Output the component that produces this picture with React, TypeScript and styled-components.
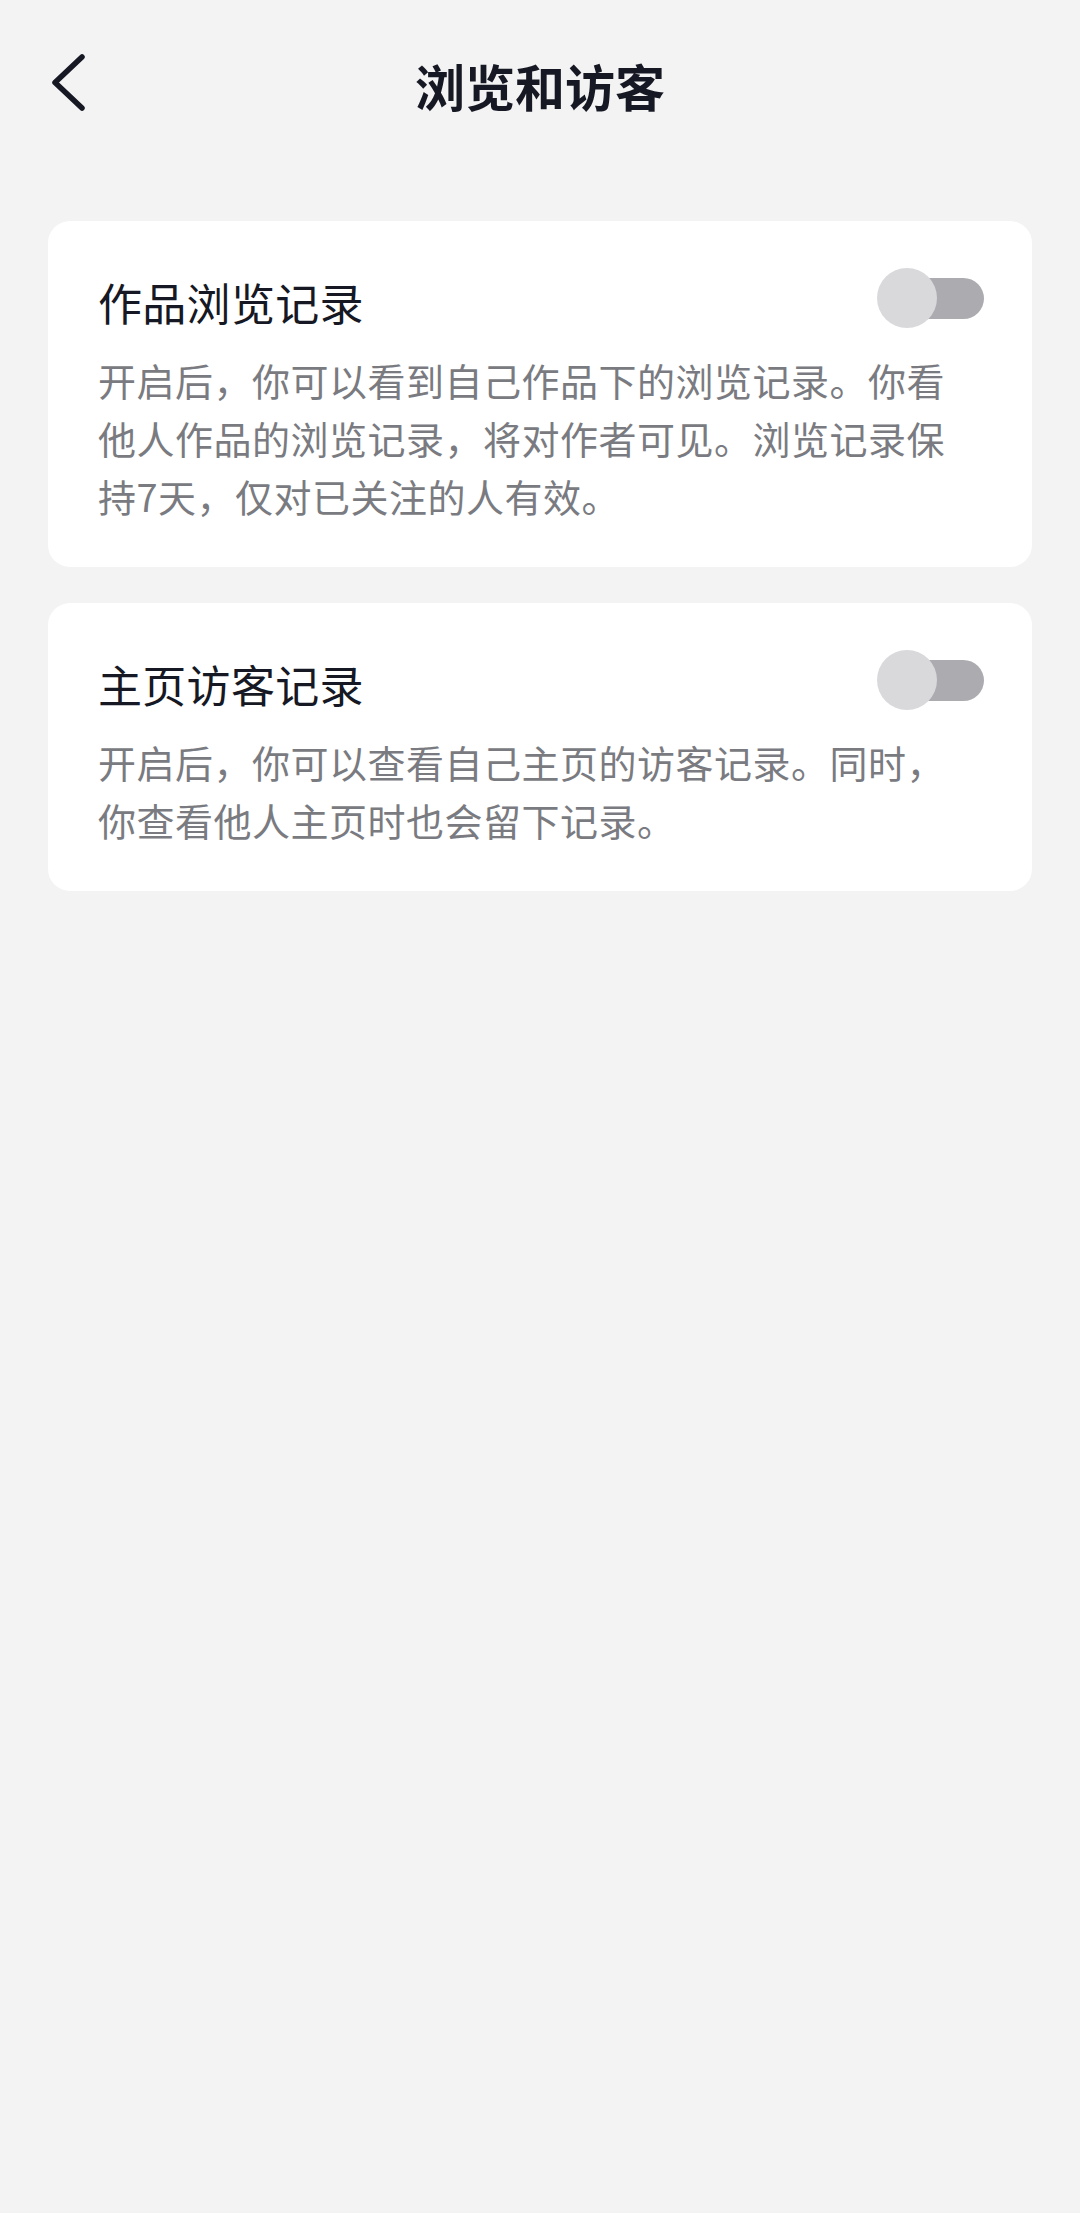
import React from "react";
import styled, { createGlobalStyle } from "styled-components";

const GlobalStyle = createGlobalStyle`
  html, body {
    margin: 0;
    padding: 0;
    background: #f3f3f3;
  }
  body {
    font-family: "Noto Sans CJK SC", "Noto Sans", sans-serif;
    color: #161823;
  }
`;

const Page = styled.div`
  min-height: 2213px;
  background: #f3f3f3;
  display: flex;
  flex-direction: column;
`;

const Header = styled.header`
  height: 170px;
  display: grid;
  grid-template-columns: 1fr auto 1fr;
  align-items: center;
`;

const BackButton = styled.button`
  justify-self: start;
  margin-left: 40px;
  padding: 0;
  border: none;
  background: transparent;
  display: flex;
  width: 60px;
  height: 80px;
  cursor: pointer;
`;

const Title = styled.h1`
  margin: 0;
  font-size: 50px;
  font-weight: 700;
  line-height: 60px;
  color: #161823;
`;

const Content = styled.main`
  padding: 51px 48px 0;
  display: flex;
  flex-direction: column;
  gap: 36px;
`;

const Card = styled.section`
  background: #ffffff;
  border-radius: 22px;
  padding: 51px 48px 42px 50px;
`;

const CardHead = styled.div`
  height: 60px;
  display: flex;
  align-items: center;
  justify-content: space-between;
`;

const CardTitle = styled.h2`
  margin: 0;
  font-size: 44px;
  font-weight: 400;
  line-height: 60px;
  letter-spacing: 0.3px;
  color: #161823;
`;

const Desc = styled.p`
  margin: 19px 0 0;
  max-width: 870px;
  font-size: 38px;
  line-height: 58px;
  letter-spacing: 0.5px;
  color: #7a7b81;
`;

const Toggle = styled.div<{ $on?: boolean }>`
  position: relative;
  width: 107px;
  height: 60px;
  margin-top: -8px;
  flex-shrink: 0;
  &::before {
    content: "";
    position: absolute;
    left: 6px;
    right: 0;
    top: 9.5px;
    height: 41px;
    border-radius: 21px;
    background: ${(p) => (p.$on ? "#fe2c55" : "#acacb0")};
  }
`;

const Knob = styled.span<{ $on?: boolean }>`
  position: absolute;
  top: 0;
  left: ${(p) => (p.$on ? "47px" : "0")};
  width: 60px;
  height: 60px;
  border-radius: 50%;
  background: #d9d9dc;
`;

const BackIcon = () => (
  <svg width="60" height="80" viewBox="0 0 60 80" fill="none">
    <path
      d="M42 12 L15 37.5 L42 63"
      stroke="#161823"
      strokeWidth="5.5"
      strokeLinecap="round"
      strokeLinejoin="round"
    />
  </svg>
);

const items = [
  {
    title: "作品浏览记录",
    desc: "开启后，你可以看到自己作品下的浏览记录。你看他人作品的浏览记录，将对作者可见。浏览记录保持7天，仅对已关注的人有效。",
  },
  {
    title: "主页访客记录",
    desc: "开启后，你可以查看自己主页的访客记录。同时，你查看他人主页时也会留下记录。",
  },
];

export default function App() {
  return (
    <>
      <GlobalStyle />
      <Page>
        <Header>
          <BackButton aria-label="返回">
            <BackIcon />
          </BackButton>
          <Title>浏览和访客</Title>
          <span />
        </Header>
        <Content>
          {items.map((it) => (
            <Card key={it.title}>
              <CardHead>
                <CardTitle>{it.title}</CardTitle>
                <Toggle role="switch" aria-checked={false}>
                  <Knob />
                </Toggle>
              </CardHead>
              <Desc>{it.desc}</Desc>
            </Card>
          ))}
        </Content>
      </Page>
    </>
  );
}
